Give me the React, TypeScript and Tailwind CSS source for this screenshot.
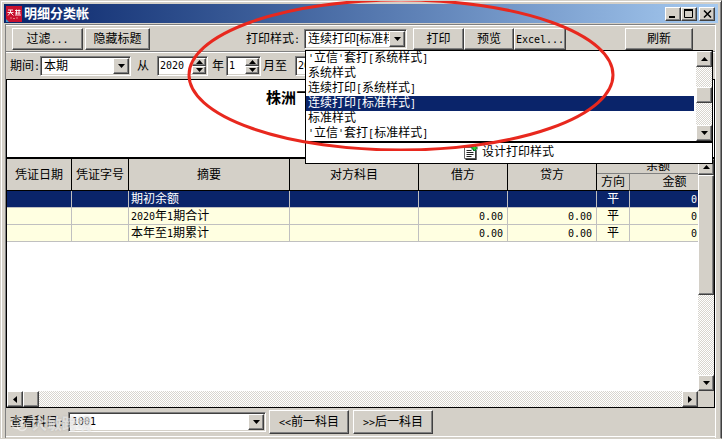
import { Fragment, useState } from "react";
import type { ReactNode } from "react";
import clsx from "clsx";

const RAISED = "bg-[#d4d0c8] border border-t-white border-l-white border-r-[#404040] border-b-[#404040] shadow-[inset_-1px_-1px_0_#808080]";
const SUNKEN = "bg-white border border-t-[#808080] border-l-[#808080] border-r-white border-b-white shadow-[inset_1px_1px_0_#404040,inset_-1px_-1px_0_#d4d0c8]";
const TRACK = "bg-[repeating-conic-gradient(#ffffff_0_25%,#d8d5ce_0_50%)] bg-[length:2px_2px]";

const STYLES = ["'立信'套打[系统样式]", "系统样式", "连续打印[系统样式]", "连续打印[标准样式]", "标准样式", "'立信'套打[标准样式]"];

const ROWS = [
  { summary: "期初余额", debit: "", credit: "", side: "平", amount: "0.00" },
  { summary: "2020年1期合计", debit: "0.00", credit: "0.00", side: "平", amount: "0.00" },
  { summary: "本年至1期累计", debit: "0.00", credit: "0.00", side: "平", amount: "0.00" },
];

// Latin characters take half the width of a Chinese one
function Mixed({ text }: { text: string }) {
  return (
    <>
      {text.split(/([\x20-\x7e]+)/).map((part, i) =>
        /^[\x20-\x7e]+$/.test(part) ? (
          <span key={i} className="font-['DejaVu_Sans_Mono',monospace] text-[10px] leading-none">{part}</span>
        ) : (
          <Fragment key={i}>{part}</Fragment>
        )
      )}
    </>
  );
}

const ARROWS = {
  up: "M0 4h7L3.5 0z",
  down: "M0 0h7L3.5 4z",
  left: "M4 0v7L0 3.5z",
  right: "M0 0v7l4-3.5z",
};

function Arrow({ dir }: { dir: keyof typeof ARROWS }) {
  const flat = dir === "up" || dir === "down";
  return (
    <svg width={flat ? 7 : 4} height={flat ? 4 : 7} className="shrink-0" aria-hidden="true">
      <path d={ARROWS[dir]} fill="#000" />
    </svg>
  );
}

function Button({ className, children }: { className: string; children: ReactNode }) {
  return (
    <button type="button" className={clsx(RAISED, "shrink-0 flex items-center justify-center whitespace-nowrap", className)}>
      <span>{children}</span>
    </button>
  );
}

function ScrollButton({ dir, label, className }: { dir: keyof typeof ARROWS; label: string; className?: string }) {
  return (
    <button type="button" aria-label={label} className={clsx(RAISED, "w-4 h-4 shrink-0 flex items-center justify-center", className)}>
      <Arrow dir={dir} />
    </button>
  );
}

function Combo({ id, options, value, className, onChange }: { id: string; options: string[]; value: string; className: string; onChange?: (v: string) => void }) {
  return (
    <div className={clsx(SUNKEN, "relative shrink-0 h-5 p-px flex", className)}>
      <select
        id={id}
        value={value}
        onChange={(e) => onChange?.(e.target.value)}
        className="appearance-none outline-none bg-transparent flex-1 min-w-0 pl-0.5 pr-4 overflow-hidden whitespace-nowrap"
      >
        {options.map((o) => <option key={o}>{o}</option>)}
      </select>
      <span className={clsx(RAISED, "absolute right-px top-px bottom-px w-4 flex items-center justify-center pointer-events-none")}>
        <Arrow dir="down" />
      </span>
    </div>
  );
}

function Spinner({ label, value, className }: { label: string; value: string; className: string }) {
  return (
    <div className={clsx(SUNKEN, "shrink-0 h-5 p-px flex", className)}>
      <input aria-label={label} defaultValue={value} className="flex-1 min-w-0 pl-px outline-none bg-transparent font-['DejaVu_Sans_Mono',monospace] text-[10px]" />
      <div className="w-[14px] flex flex-col">
        <button type="button" aria-label={`${label}加`} className={clsx(RAISED, "flex-1 flex items-center justify-center")}><Arrow dir="up" /></button>
        <button type="button" aria-label={`${label}减`} className={clsx(RAISED, "flex-1 flex items-center justify-center")}><Arrow dir="down" /></button>
      </div>
    </div>
  );
}

function TitleBar() {
  return (
    <header className="h-[19px] flex items-center pl-0.5 pr-[3px] bg-linear-to-r from-[#0a246a] to-[#a6caf0]">
      <svg width="16" height="16" viewBox="0 0 16 16" aria-hidden="true">
        <rect width="16" height="16" fill="#c8102e" />
        <path d="M2 4h5M1.500 6.500h6M4.500 4v2.500L2 9.500M4.500 6.500L7.500 9.500M9 4.500h5.500M9 7h5.500M9 9h6M10.500 3.500v5M13 3.500v5" stroke="#fff" strokeWidth=".9" fill="none" />
        <path d="M4 12h2M7 12.500h2M10 12h2" stroke="#e99" strokeWidth=".8" />
        <path d="M0 13v3h3z" fill="#39c" />
      </svg>
      <h1 className="flex-1 pl-0.5 text-[13px] leading-[19px] font-bold text-white">明细分类帐</h1>
      <div className="flex">
        <button type="button" aria-label="最小化" className={clsx(RAISED, "w-4 h-[14px] flex items-center justify-center")}>
          <svg width="10" height="9"><path d="M1 7h6v2H1z" /></svg>
        </button>
        <button type="button" aria-label="最大化" className={clsx(RAISED, "w-4 h-[14px] flex items-center justify-center")}>
          <svg width="10" height="9"><path d="M.5 1h8v7.500h-8z" fill="none" stroke="#000" /><path d="M0 0h9v2H0z" /></svg>
        </button>
        <button type="button" aria-label="关闭" className={clsx(RAISED, "ml-0.5 w-4 h-[14px] flex items-center justify-center")}>
          <svg width="9" height="8"><path d="M1 .5l7 7M8 .5l-7 7" stroke="#000" strokeWidth="1.500" /></svg>
        </button>
      </div>
    </header>
  );
}

function StyleList({ value, onPick }: { value: string; onPick: (v: string) => void }) {
  return (
    <div className="absolute left-px top-full z-10 w-[408px] mt-px bg-white border border-black">
      <div className="flex">
        <ul role="listbox" aria-label="打印样式" className="flex-1 pr-0.5">
          {STYLES.map((s) => (
            <li
              key={s}
              role="option"
              aria-selected={s === value}
              onClick={() => onPick(s)}
              className={clsx("h-[15px] leading-[15px] pl-0.5", s === value && "bg-[#0a246a] text-white")}
            >
              <Mixed text={s} />
            </li>
          ))}
        </ul>
        <div className={clsx(TRACK, "w-4 flex flex-col")}>
          <ScrollButton dir="up" label="向上" />
          <div className={clsx(RAISED, "h-4 mt-5")} />
          <ScrollButton dir="down" label="向下" className="mt-auto" />
        </div>
      </div>
      <button type="button" className="w-full h-[22px] border-t-2 border-black flex items-center justify-center gap-1 pb-px">
        <svg width="14" height="15" viewBox="0 0 14 15" aria-hidden="true">
          <path d="M.5 2.500h8v1.500h3v9.500h-11z" fill="#fff" stroke="#666" />
          <path d="M12 5v9.300H1.500" stroke="#222" strokeWidth="1.300" fill="none" />
          <path d="M2.500 5.500h5M2.500 7.500h7M2.500 9.500h7M2.500 11.500h5" stroke="#222" />
          <path d="M10.500 0v6M7.500 3h6" stroke="#063" strokeWidth="3" />
          <path d="M10.500 .7v4.600M8.200 3h4.600" stroke="#2fd32f" strokeWidth="1.500" />
        </svg>
        设计打印样式
      </button>
    </div>
  );
}

function Ledger() {
  const th = "border-r border-b border-black bg-[#d4d0c8] font-normal p-0";
  const td = "h-[17px] p-0 border-r border-b border-[#c0c0c0] leading-4";
  return (
    <table className="w-[713px] min-w-full table-fixed border-separate border-spacing-0">
      <colgroup>
        <col className="w-[65px]" />
        <col className="w-[57px]" />
        <col className="w-[161px]" />
        <col className="w-[129px]" />
        <col className="w-[89px]" />
        <col className="w-[89px]" />
        <col className="w-[33px]" />
        <col />
      </colgroup>
      <thead>
        <tr className="h-[15px]">
          {["凭证日期", "凭证字号", "摘要", "对方科目", "借方", "贷方"].map((h) => (
            <th key={h} rowSpan={2} scope="col" className={th}>{h}</th>
          ))}
          <th colSpan={2} scope="colgroup" className={clsx(th, "border-b-[#808080] leading-[14px]")}>余额</th>
        </tr>
        <tr className="h-[17px]">
          <th scope="col" className={clsx(th, "border-r-[#808080] leading-4")}>方向</th>
          <th scope="col" className={clsx(th, "leading-4")}>金额</th>
        </tr>
      </thead>
      <tbody>
        {ROWS.map((r, i) => (
          <tr key={r.summary} className={i === 0 ? "bg-[#0a246a] text-white" : "bg-[#ffffe1]"}>
            <td className={td} />
            <td className={td} />
            <td className={clsx(td, "pl-0.5")}><Mixed text={r.summary} /></td>
            <td className={td} />
            <td className={clsx(td, "pr-1 text-right")}><Mixed text={r.debit} /></td>
            <td className={clsx(td, "pr-1 text-right")}><Mixed text={r.credit} /></td>
            <td className={clsx(td, "text-center")}>{r.side}</td>
            <td className={clsx(td, "pr-1 text-right")}><Mixed text={r.amount} /></td>
          </tr>
        ))}
      </tbody>
    </table>
  );
}

export default function App() {
  const [style, setStyle] = useState("连续打印[标准样式]");

  return (
    <div className="relative min-h-screen overflow-hidden flex flex-col bg-[#d4d0c8] p-[3px] pb-0 border border-[#d4d0c8] border-r-[#404040] shadow-[inset_1px_1px_0_#fff,inset_-1px_0_0_#808080] font-['Liberation_Sans','Noto_Sans_CJK_SC',sans-serif] text-xs leading-4 text-black">
      <TitleBar />

      <main className="flex-1 mt-px ml-px mr-0.5 flex flex-col border-t border-l border-r border-t-[#808080] border-l-[#808080] border-r-white">
        <div className="h-[27px] pl-1.5 flex items-center border-t border-t-white border-b border-b-[#808080]">
          <Button className="w-[71px] h-[22px]"><Mixed text="过滤..." /></Button>
          <Button className="w-[65px] h-[22px] ml-0.5">隐藏标题</Button>
          <label htmlFor="print-style" className="ml-24 w-[58px] whitespace-nowrap"><Mixed text="打印样式:" /></label>
          <div className="relative">
            <Combo id="print-style" options={STYLES} value={style} onChange={setStyle} className="w-[103px]" />
            <StyleList value={style} onPick={setStyle} />
          </div>
          <Button className="w-[51px] h-[22px] ml-1.5">打印</Button>
          <Button className="w-[50px] h-[22px]">预览</Button>
          <Button className="w-[52px] h-[22px]"><Mixed text="Excel..." /></Button>
          <Button className="w-[68px] h-[22px] ml-[59px]">刷新</Button>
        </div>

        <div className="h-[27px] pl-1 flex items-center border-t border-white">
          <label htmlFor="period" className="w-[30px] whitespace-nowrap"><Mixed text="期间:" /></label>
          <Combo id="period" options={["本期"]} value="本期" className="w-[91px]" />
          <span className="ml-1.5">从</span>
          <Spinner label="起始年" value="2020" className="w-[51px] ml-2" />
          <span className="ml-1">年</span>
          <Spinner label="起始月" value="1" className="w-[35px] ml-0.5" />
          <span className="ml-0.5">月至</span>
          <Spinner label="截止年" value="2020" className="w-[51px] ml-2" />
        </div>

        <section className="flex-1 flex flex-col bg-white border border-black">
          <h2 className="h-[77px] pl-[259px] pt-2 text-[15px] leading-5 font-bold">株洲乛</h2>
          <div className="flex-1 min-w-0 flex border-t-2 border-black">
            <div className="flex-1 min-w-0 flex flex-col">
              <div className="flex-1 overflow-hidden"><Ledger /></div>
              <div className={clsx(TRACK, "h-4 flex")}>
                <ScrollButton dir="left" label="向左" />
                <div className={clsx(RAISED, "w-4")} />
                <ScrollButton dir="right" label="向右" className="ml-auto" />
              </div>
            </div>
            <div className={clsx(TRACK, "w-4 flex flex-col")}>
              <ScrollButton dir="up" label="向上" />
              <div className={clsx(RAISED, "h-30")} />
              <ScrollButton dir="down" label="向下" className="mt-auto" />
              <div className="h-4 bg-[#d4d0c8]" />
            </div>
          </div>
        </section>

        <footer className="h-7 pl-1 flex items-center">
          <div className="relative w-[58px]">
            <label htmlFor="account" className="whitespace-nowrap"><Mixed text="查看科目:" /></label>
            <span className="absolute left-0 top-0.5 z-10 flex items-center gap-1 whitespace-nowrap text-[15px] leading-4 font-bold text-white/50 [text-shadow:0_0_2px_#99999980] pointer-events-none">
              <svg width="18" height="16" viewBox="0 0 18 16" fill="none" stroke="currentColor" strokeWidth="1.500" aria-hidden="true">
                <circle cx="7" cy="7" r="5.500" />
                <circle cx="12" cy="10" r="4.500" />
              </svg>
              大敏跨境
            </span>
          </div>
          <Combo id="account" options={["1001"]} value="1001" className="w-[198px] font-['DejaVu_Sans_Mono',monospace] text-[10px]" />
          <Button className="w-20 h-6 ml-[3px]"><Mixed text="<<前一科目" /></Button>
          <Button className="w-20 h-6 ml-1"><Mixed text=">>后一科目" /></Button>
        </footer>
        <div className="h-0.5 border-t border-white" />
      </main>

      <svg width="430" height="154" className="absolute left-[185px] -top-1 z-20 pointer-events-none" aria-hidden="true">
        <ellipse cx="215" cy="78" rx="212" ry="75" fill="none" stroke="#e8281e" strokeWidth="3" />
      </svg>
    </div>
  );
}
